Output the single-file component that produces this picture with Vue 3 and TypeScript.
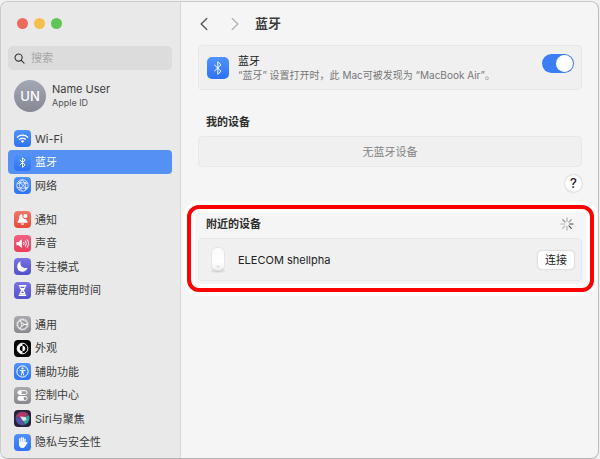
<script setup lang="ts">
import { ref } from 'vue'

interface Item {
  id: string
  label: string
}

const groups: Item[][] = [
  [
    { id: 'wifi', label: 'Wi-Fi' },
    { id: 'bluetooth', label: '蓝牙' },
    { id: 'network', label: '网络' },
  ],
  [
    { id: 'notify', label: '通知' },
    { id: 'sound', label: '声音' },
    { id: 'focus', label: '专注模式' },
    { id: 'time', label: '屏幕使用时间' },
  ],
  [
    { id: 'general', label: '通用' },
    { id: 'look', label: '外观' },
    { id: 'access', label: '辅助功能' },
    { id: 'control', label: '控制中心' },
    { id: 'siri', label: 'Siri与聚焦' },
    { id: 'privacy', label: '隐私与安全性' },
  ],
]

const active = ref('bluetooth')
const query = ref('')
const enabled = ref(true)
const spokes = [0.35, 0.45, 0.9, 0.8, 0.35, 0.3, 0.35, 0.5]
</script>

<template>
  <div class="window">
    <aside class="sidebar">
      <div class="lights">
        <button class="light red" type="button" aria-label="关闭"></button>
        <button class="light yellow" type="button" aria-label="最小化"></button>
        <button class="light green" type="button" aria-label="缩放"></button>
      </div>
      <label class="search">
        <svg class="lens" viewBox="0 0 12 12" aria-hidden="true">
          <circle cx="5" cy="5" r="3.9" />
          <path d="M8 8l3 3" />
        </svg>
        <input v-model="query" type="search" placeholder="搜索" aria-label="搜索" />
      </label>
      <a class="account" href="#account">
        <span class="avatar">UN</span>
        <span class="who">
          <span class="name">Name User</span>
          <span class="sub">Apple ID</span>
        </span>
      </a>
      <nav class="nav">
        <ul v-for="(group, g) in groups" :key="g" class="group">
          <li v-for="item in group" :key="item.id" class="row">
            <a
              class="item"
              :class="{ active: active === item.id }"
              :href="'#' + item.id"
              @click.prevent="active = item.id"
            >
              <span class="tile" :class="item.id">
                <svg viewBox="0 0 17 17" aria-hidden="true">
                  <g v-if="item.id === 'wifi'" class="line thick">
                    <path d="M3 7.4a7.8 7.8 0 0 1 11 0M5.1 9.6a4.8 4.8 0 0 1 6.8 0" />
                    <path class="solid" d="M8.5 13l-1.8-1.9a2.6 2.6 0 0 1 3.6 0z" />
                  </g>
                  <path
                    v-else-if="item.id === 'bluetooth'"
                    class="line"
                    d="M5.7 5.9l5.4 4.9-2.6 2.5V3.7l2.6 2.5-5.4 4.9"
                  />
                  <g v-else-if="item.id === 'network'" class="line thin">
                    <circle cx="8.5" cy="8.5" r="5.7" />
                    <path
                      d="M3.2 6.8c3.2-1.5 7.4-1.5 10.5 0M3 10.2c3.4 1.5 7.6 1.5 11 0M8 2.8c-3.6 3.4-3.2 8 .5 11.4M8 2.8c3.4 2.6 4.6 7.2 3 10.8M4.5 4.5l8.5 7.5M12.6 4.6L5.2 13"
                    />
                  </g>
                  <g v-else-if="item.id === 'notify'" class="solid">
                    <path
                      d="M8.3 2.9c-2.5.3-3.2 2.1-3.3 4.2-.1 2-.7 2.7-1.6 3.7-.3.5 0 .9.5.9h9.2c.5 0 .8-.4.5-.9-.8-.9-1.3-1.5-1.5-2.7-2.6.2-4.4-2.5-3.8-5.2zM6.7 12.5h3.6c-.3 1.7-3.3 1.7-3.6 0z"
                    />
                    <circle cx="11.4" cy="5" r="2" />
                  </g>
                  <g v-else-if="item.id === 'sound'">
                    <path class="solid" d="M2.5 7h2l3.300-2.8v8.800L4.500 10.200h-2z" />
                    <path
                      class="line"
                      d="M9.500 7a2.600 2.600 0 0 1 0 3.100M11.300 5.600a5 5 0 0 1 0 5.900M13 4.300a7.200 7.200 0 0 1 0 8.400"
                    />
                  </g>
                  <path
                    v-else-if="item.id === 'focus'"
                    class="solid"
                    d="M6.500 3.200c-1 4.600 2.300 7.900 7.200 6.600-1.200 2.700-3.300 4-5.700 3.900C2.500 13.400 1.400 6.200 6.500 3.200z"
                  />
                  <g v-else-if="item.id === 'time'" class="solid">
                    <path d="M4.700 3h7.600v1.400H4.700zM4.700 12.600h7.600V14H4.700z" />
                    <path
                      d="M5.500 4.400h6c0 2-.7 2.900-1.900 4.100 1.200 1.200 1.900 2.100 1.900 4.100h-6c0-2 .7-2.900 1.900-4.100C6.200 7.300 5.500 6.400 5.500 4.400z"
                    />
                    <path class="cut" d="M6.700 5h3.600v1H6.700zM8.500 9.300l1.600 1.700H6.900z" />
                  </g>
                  <g v-else-if="item.id === 'general'" class="line">
                    <circle cx="8.500" cy="8.500" r="4.800" />
                    <circle class="teeth" cx="8.500" cy="8.500" r="5.700" />
                    <circle cx="8.500" cy="8.500" r="1.300" />
                    <path d="M9.800 8.500h3.400M7.800 7.400L6.100 4.400M7.800 9.600l-1.700 3" />
                  </g>
                  <g v-else-if="item.id === 'look'">
                    <circle class="line" cx="8.500" cy="8.500" r="5.300" />
                    <path class="solid" d="M8.500 3.200a5.300 5.300 0 0 0 0 10.600v-2.600a2.700 2.700 0 0 1 0-5.400z" />
                    <path class="solid" d="M8.500 5.800a2.700 2.700 0 0 1 0 5.400z" />
                  </g>
                  <g v-else-if="item.id === 'access'">
                    <circle class="line" cx="8.500" cy="8.500" r="5.600" />
                    <circle class="solid" cx="8.500" cy="5.500" r="1.100" />
                    <path class="line" d="M5.700 7.300l2.100.4h1.400l2.100-.4M8.500 7.700v2M8 7.800v2.100l-.8 2.600M9 7.800v2.100l.8 2.600" />
                  </g>
                  <g v-else-if="item.id === 'control'">
                    <rect class="solid" x="3.400" y="9" width="10.200" height="4.800" rx="2.400" />
                    <rect class="line" x="3.900" y="3.700" width="9.200" height="3.800" rx="1.900" />
                    <circle class="solid" cx="5.900" cy="5.600" r="1.900" />
                    <circle class="gray" cx="11.200" cy="11.400" r="1.500" />
                  </g>
                  <g v-else-if="item.id === 'siri'">
                    <circle class="orb" cx="8.500" cy="8.500" r="7" />
                    <path class="pink" d="M2 6.500c2-5 9-6 12-2.500L9 8.500z" />
                    <path class="cyan" d="M8 8l7-2.500c1 3.500-.5 7.500-4 8.700z" />
                    <path class="violet" d="M2 7.500l6.500 1 1.500 6C6 16 2 13 2 7.500z" />
                    <path class="solid" d="M6 6.600l5.500.4 1 3-3.500 1z" />
                  </g>
                  <g v-else class="solid">
                    <path
                      class="fingers"
                      d="M5.700 9V5M7.500 8V3.700M9.300 8V3.900M11 9V5.200M11 11.500l1.900-3"
                    />
                    <path d="M5 8h6.700v2.500c-.1 2.300-1.400 3.500-3.300 3.500S5 12.700 5 10.700z" />
                  </g>
                </svg>
              </span>
              <span>{{ item.label }}</span>
            </a>
          </li>
        </ul>
      </nav>
    </aside>

    <main class="content">
      <header class="toolbar">
        <button class="arrow" type="button" aria-label="后退">
          <svg viewBox="0 0 8 14" aria-hidden="true"><path d="M6.800 1.500L1.200 7l5.600 5.500" /></svg>
        </button>
        <button class="arrow next" type="button" aria-label="前进">
          <svg viewBox="0 0 8 14" aria-hidden="true"><path d="M1.200 1.500L6.800 7l-5.600 5.500" /></svg>
        </button>
        <h1 class="title">蓝牙</h1>
      </header>

      <div class="card power">
        <span class="badge">
          <svg viewBox="0 0 22 22" aria-hidden="true">
            <path class="line" d="M7.300 7.800l6.700 6.400-3.200 3.100V4.700L14 7.800l-6.700 6.400" />
          </svg>
        </span>
        <label class="about" for="bt-switch">
          <span class="head">蓝牙</span>
          <span class="desc">“蓝牙” 设置打开时，此 Mac可被发现为 “MacBook Air”。</span>
        </label>
        <input id="bt-switch" v-model="enabled" class="switch" type="checkbox" role="switch" />
      </div>

      <section class="mine">
        <h2 class="heading">我的设备</h2>
        <div class="card empty">无蓝牙设备</div>
        <button class="help" type="button">?</button>
      </section>

      <section class="nearby">
        <div class="bar">
          <h2 class="heading">附近的设备</h2>
          <svg class="spinner" viewBox="0 0 14 14" aria-hidden="true">
            <path
              v-for="(o, i) in spokes"
              :key="i"
              d="M7 4.300V1"
              :opacity="o"
              :transform="`rotate(${i * 45} 7 7)`"
            />
          </svg>
        </div>
        <div class="card device">
          <svg class="mouse" viewBox="0 0 22 28" aria-hidden="true">
            <defs>
              <linearGradient id="shell" x1="0" y1="0" x2="0" y2="1">
                <stop offset="0" stop-color="#fafafa" />
                <stop offset="0.6" stop-color="#fff" />
                <stop offset="1" stop-color="#ebebeb" />
              </linearGradient>
            </defs>
            <ellipse cx="11" cy="25.300" rx="7" ry="1.200" fill="#cfcfcf" opacity="0.7" />
            <rect x="4.500" y="1.500" width="13" height="24" rx="5.500" fill="url(#shell)" stroke="#dedede" stroke-width="0.7" />
            <path d="M5.500 22.500c1.500 3.600 9.500 3.600 11 0" fill="none" stroke="#bdbdbd" stroke-width="0.7" />
            <circle cx="11" cy="20.500" r="0.9" fill="#d2d2d2" />
          </svg>
          <span class="device-name">ELECOM shellpha</span>
          <button class="connect" type="button">连接</button>
        </div>
      </section>
    </main>
  </div>
</template>

<style>
body {
  background: #f1f1f1;
}
</style>

<style scoped>
* {
  box-sizing: border-box;
}

.window {
  display: flex;
  min-height: calc(100vh - 2px);
  margin: 1px 1px 0 0;
  border: 1px solid #c9c9c9;
  border-right-color: #bcbcbc;
  border-bottom-color: #b4b4b4;
  border-radius: 8px;
  overflow: hidden;
  background: #f5f5f5;
  color: #3c3c3c;
  font-family: Inter, 'Noto Sans CJK SC', sans-serif;
  font-size: 11px;
  line-height: 14px;
}

button,
input {
  margin: 0;
  padding: 0;
  border: 0;
  font: inherit;
  color: inherit;
}

a {
  color: inherit;
  text-decoration: none;
}

h1,
h2 {
  margin: 0;
}

.sidebar {
  flex: none;
  width: 180px;
  padding: 16px 8px 4px 7px;
  border-right: 1px solid #d8d8d8;
  background: #e9e9e9;
}

.lights {
  display: flex;
  gap: 6px;
  padding-left: 9px;
}

.light {
  width: 11px;
  height: 11px;
  border-radius: 50%;
}

.red {
  background: #ed6a5e;
}

.yellow {
  background: #f5bf4f;
}

.green {
  background: #61c554;
}

.search {
  display: flex;
  align-items: center;
  gap: 6px;
  height: 24px;
  margin-top: 17px;
  padding: 0 6px;
  border-radius: 5px;
  background: #dcdcdc;
}

.lens {
  flex: none;
  width: 11px;
  height: 11px;
  fill: none;
  stroke: #333;
  stroke-width: 1.2;
  stroke-linecap: round;
}

.search input {
  flex: 1;
  min-width: 0;
  outline: 0;
  background: none;
  appearance: none;
}

.search input::placeholder {
  color: #a6a6a6;
  opacity: 1;
}

.account {
  display: flex;
  align-items: center;
  gap: 6px;
  margin-top: 10px;
  padding-left: 6px;
}

.avatar {
  display: grid;
  place-items: center;
  width: 32px;
  height: 32px;
  border-radius: 50%;
  background: linear-gradient(#a4a8b5, #868894);
  color: #fff;
  font-size: 13px;
  font-weight: 500;
}

.who {
  display: flex;
  flex-direction: column;
}

.sub {
  font-size: 9px;
  color: #555;
}

.nav {
  display: flex;
  flex-direction: column;
  gap: 11px;
  margin-top: 15px;
}

.group {
  margin: 0;
  padding: 0;
  list-style: none;
}

.row {
  height: 23px;
}

.row:nth-child(even) {
  height: 24px;
}

.item {
  display: flex;
  align-items: center;
  gap: 4px;
  height: 100%;
  padding: 0 6px;
  border-radius: 4px;
  white-space: nowrap;
}

.item.active {
  background: #5590f5;
  color: #fff;
}

.tile {
  flex: none;
  width: 17px;
  height: 17px;
  border-radius: 4px;
  background: linear-gradient(#4f93fb, #2f72f4);
  overflow: hidden;
}

.tile svg,
.badge svg {
  display: block;
  width: 100%;
  height: 100%;
}

.tile.notify {
  background: linear-gradient(#f2776a, #e74a37);
}

.tile.sound {
  background: linear-gradient(#f26180, #ea3d5b);
}

.tile.focus,
.tile.time {
  background: linear-gradient(#7874e0, #5350cb);
}

.tile.general,
.tile.control {
  background: linear-gradient(#a9a9ae, #88888d);
}

.tile.look {
  background: #050505;
}

.tile.siri {
  background: #2a2138;
}

.line {
  fill: none;
  stroke: #fff;
  stroke-width: 1;
  stroke-linejoin: round;
}

.thick {
  stroke-width: 1.4;
}

.thin {
  stroke-width: 0.7;
}

.solid {
  fill: #fff;
  stroke: none;
}

.cut {
  fill: #625fd2;
}

.gray {
  fill: #8e8e93;
}

.teeth {
  stroke-width: 1;
  stroke-dasharray: 0.8 0.8;
}

.fingers {
  fill: none;
  stroke: #fff;
  stroke-width: 1.4;
  stroke-linecap: round;
}

.orb {
  fill: #315575;
}

.pink {
  fill: #b8356a;
}

.cyan {
  fill: #35a89c;
}

.violet {
  fill: #5a50a8;
}

.siri .solid {
  opacity: 0.8;
}

.content {
  flex: 1;
  min-width: 0;
  padding: 12px 4px 12px 6px;
}

.toolbar {
  display: flex;
  align-items: center;
  height: 20px;
  padding-left: 13px;
}

.arrow {
  width: 8px;
  height: 14px;
  margin-right: 23px;
  background: none;
}

.arrow svg {
  display: block;
  fill: none;
  stroke: #555;
  stroke-width: 1.3;
  stroke-linecap: round;
  stroke-linejoin: round;
}

.arrow.next {
  margin-right: 16px;
}

.arrow.next svg {
  stroke: #b2b2b2;
}

.title {
  font-size: 13px;
  font-weight: 600;
  line-height: 18px;
}

.toolbar .title {
  padding-bottom: 2px;
}

.card {
  display: flex;
  align-items: center;
  border: 1px solid #e8e8e8;
  border-radius: 4px;
  background: #f0f0f0;
}

.power,
.mine {
  margin: 0 12px 0 11px;
}

.power {
  min-height: 45px;
  margin-top: 11px;
  padding: 0 7px 0 8px;
}

.badge {
  flex: none;
  width: 22px;
  height: 22px;
  border-radius: 5px;
  background: linear-gradient(#4f93fb, #2f72f4);
}

.about {
  display: flex;
  flex: 1;
  flex-direction: column;
  margin-left: 9px;
}

.head {
  color: #222;
}

.desc {
  font-size: 10px;
  color: #777;
}

.switch {
  flex: none;
  display: flex;
  align-items: center;
  width: 32px;
  height: 19px;
  margin-bottom: 9px;
  padding: 1px;
  border-radius: 10px;
  background: #c9c9c9;
  appearance: none;
}

.switch::before {
  content: '';
  width: 17px;
  height: 17px;
  border-radius: 50%;
  background: #fff;
}

.switch:checked {
  justify-content: flex-end;
  background: #3b7df5;
}

.mine {
  display: flex;
  flex-direction: column;
  margin-top: 24px;
}

.heading {
  padding-left: 8px;
  color: #2e2e2e;
  font-size: 11px;
  font-weight: 600;
  line-height: 16px;
}

.empty {
  justify-content: center;
  min-height: 31px;
  margin-top: 6px;
  color: #858585;
}

.help {
  align-self: flex-end;
  width: 17px;
  height: 17px;
  margin-top: 8px;
  border-radius: 50%;
  background: #fff;
  box-shadow: 0 0 2px rgba(0, 0, 0, 0.3);
  color: #222;
  font-size: 13px;
  font-weight: 500;
  line-height: 17px;
  text-align: center;
}

.nearby {
  margin-top: 13px;
  padding: 7px 8px 7px 7px;
  border: 4px solid #f00;
  border-radius: 12px;
  box-shadow:
    0 0 0 4px #fff,
    inset 0 0 0 4px #fff;
}

.bar {
  display: flex;
  align-items: center;
  justify-content: space-between;
  padding-right: 8px;
}

.spinner {
  width: 14px;
  height: 14px;
  fill: none;
  stroke: #333;
  stroke-width: 1.2;
  stroke-linecap: round;
}

.device {
  min-height: 43px;
  margin-top: 6px;
  padding: 0 7px 0 8px;
}

.mouse {
  width: 22px;
  height: 28px;
}

.device-name {
  flex: 1;
  margin-left: 9px;
  color: #222;
}

.connect {
  width: 36px;
  height: 18px;
  border-radius: 4px;
  background: #fff;
  box-shadow: 0 0 2px rgba(0, 0, 0, 0.25);
  color: #222;
  line-height: 18px;
}
</style>
